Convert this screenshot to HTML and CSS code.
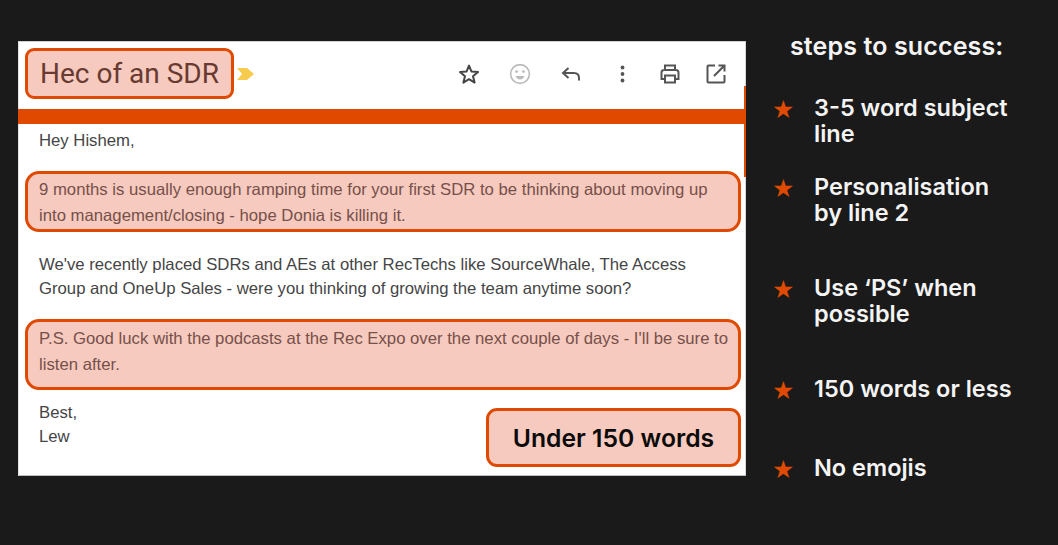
FILE: index.html
```html
<!DOCTYPE html>
<html lang="en">
<head>
<meta charset="utf-8">
<title>Steps to success</title>
<link rel="stylesheet" href="styles.css">
</head>
<body>
<main class="page">
  <section class="card">
    <span class="edge"></span>
    <header class="head">
      <div class="subject-wrap">
        <h1 class="subject">Hec of an SDR</h1>
        <svg class="marker" viewBox="0 0 17 12" width="17" height="12"><path d="M0 0h10l7 6-7 6H0l5-6z" fill="#f7cb4d"/></svg>
      </div>
      <div class="tools">
        <svg class="icon" viewBox="0 0 24 24"><path d="M12 3.600l2.500 6 6.500.5-5 4.200 1.600 6.300-5.600-3.400-5.600 3.400 1.600-6.300-5-4.200 6.500-.5z" fill="none" stroke="#444" stroke-width="2" stroke-linejoin="round"/></svg>
        <svg class="icon" viewBox="0 0 24 24"><circle cx="12" cy="12" r="9.400" fill="none" stroke="#bbb" stroke-width="1.600"/><circle cx="8.600" cy="9.600" r="1.400" fill="#bbb"/><circle cx="15.400" cy="9.600" r="1.400" fill="#bbb"/><path d="M7.600 14h8.800c-.6 2.200-2.300 3.400-4.400 3.400s-3.800-1.200-4.400-3.400z" fill="#bbb"/></svg>
        <svg class="icon" viewBox="0 0 24 24"><path d="M9.500 6L4 11l5.500 5M4.500 11H15c3 0 5 2 5 5v2.500" fill="none" stroke="#555" stroke-width="2"/></svg>
        <svg class="icon" viewBox="0 0 24 24"><circle cx="12.500" cy="5.500" r="1.900" fill="#555"/><circle cx="12.500" cy="12" r="1.900" fill="#555"/><circle cx="12.500" cy="18.500" r="1.900" fill="#555"/></svg>
        <svg class="icon icon-print" viewBox="0 0 24 24"><path d="M7 8V3.500h10V8M7 17H3.500v-6.500c0-1.400 1-2.500 2.500-2.500h12c1.500 0 2.500 1.100 2.500 2.500V17H17M7 13.500h10v7H7z" fill="none" stroke="#555" stroke-width="2"/></svg>
        <svg class="icon icon-open" viewBox="0 0 24 24"><path d="M11 3.500H4.500c-.6 0-1 .4-1 1v15c0 .6.4 1 1 1h15c.6 0 1-.4 1-1V13M14.500 3.500h6v6M20.500 3.500L10 14" fill="none" stroke="#555" stroke-width="2"/></svg>
      </div>
    </header>
    <div class="bar"></div>
    <div class="mail">
      <p class="greeting">Hey Hishem,</p>
      <p class="mark mark-first">9 months is usually enough ramping time for your first SDR to be thinking about moving up into management/closing - hope Donia is killing it.</p>
      <p class="plain">We've recently placed SDRs and AEs at other RecTechs like SourceWhale, The Access Group and OneUp Sales - were you thinking of growing the team anytime soon?</p>
      <p class="mark mark-second">P.S. Good luck with the podcasts at the Rec Expo over the next couple of days - I'll be sure to listen after.</p>
      <div class="sign-row">
        <p class="sign">Best,<br>Lew</p>
        <div class="badge">Under 150 words</div>
      </div>
    </div>
  </section>
  <aside class="steps">
    <h2 class="steps-title">steps to success:</h2>
    <ul class="list">
      <li class="item item-1"><span class="star">★</span><span class="label">3-5 word subject line</span></li>
      <li class="item item-2"><span class="star">★</span><span class="label">Personalisation by line 2</span></li>
      <li class="item item-3"><span class="star">★</span><span class="label">Use ‘PS’ when possible</span></li>
      <li class="item item-4"><span class="star">★</span><span class="label">150 words or less</span></li>
      <li class="item item-5"><span class="star">★</span><span class="label">No emojis</span></li>
    </ul>
  </aside>
</main>
</body>
</html>
```
FILE: styles.css
```css
* { box-sizing: border-box; margin: 0; padding: 0; }
html, body { height: 100%; }
body { background: #1a1a1a; overflow: hidden; }
.page { display: flex; align-items: flex-start; padding: 41px 0 0 18px; }
.card { position: relative; width: 728px; height: 435px; background: #fff; flex: none; box-shadow: inset 1px 0 0 #e2e2e2, inset 0 -1px 0 #bdbdbd, inset 0 1px 0 #cfcfcf, inset -1px 0 0 #d8d8d8; }
.edge { position: absolute; right: 0; top: 45px; width: 2px; height: 91px; background: #df4a00; }
.head { height: 68px; display: flex; align-items: flex-start; justify-content: space-between; padding: 7px 18px 0 7px; }
.subject-wrap { display: flex; align-items: center; gap: 3px; }
.subject {
  width: 209px; height: 51px; border: 3px solid #df4a00; border-radius: 9px; background: #f6cabe;
  font: 400 28px/46px Roboto, sans-serif; color: #683a32; padding-left: 12px; white-space: nowrap;
}
.marker { display: block; }
.tools { display: flex; gap: 27px; padding-top: 14px; }
.icon { width: 24px; height: 24px; display: block; }
.icon-print { margin-left: -3px; }
.icon-open { margin-left: -5px; }
.bar { height: 15px; background: #df4a00; }
.mail { padding: 4px 5px 0 7px; font: 16.720px/25px "Liberation Sans", Arial, sans-serif; color: #454545; }
.greeting { padding-left: 14px; }
.mark {
  border: 3px solid #df4a00; border-radius: 14px; background: #f6cabe; color: #77504a;
  padding: 3px 6px 0 11px; line-height: 26px;
}
.mark-first { margin-top: 18px; height: 61px; }
.plain { padding: 0 30px 0 14px; margin-top: 21px; line-height: 24px; }
.mark-second { margin-top: 18px; height: 71px; padding-top: 4px; }
.sign-row { display: flex; justify-content: space-between; align-items: flex-start; margin-top: 18px; }
.sign { padding-left: 14px; line-height: 24px; margin-top: -7px; }
.badge {
  width: 255px; height: 59px; border: 3px solid #df4a00; border-radius: 11px; background: #f6cabe;
  color: #0c0b0b; font: 600 24.700px/54px Inter, sans-serif; text-align: center;
}
.steps { color: #f4f4f4; font-family: Inter, sans-serif; font-weight: 600; padding-left: 28px; }
.steps-title { font-size: 25px; font-weight: 600; line-height: 30px; margin: -10px 0 0 16px; letter-spacing: .13px; }
.list { list-style: none; font-size: 23.500px; line-height: 26px; }
.item { display: flex; }
.star { width: 40px; flex: none; margin-top: 2px; color: #df4a00; font: 25px/26px "DejaVu Sans", sans-serif; margin-left: -2px; margin-right: 2px; }
.label { width: 205px; }
.item-1 { margin-top: 34px; }
.item-2 { margin-top: 27px; }
.item-3 { margin-top: 49px; }
.item-4 { margin-top: 49px; }
.item-5 { margin-top: 51px; }
```
